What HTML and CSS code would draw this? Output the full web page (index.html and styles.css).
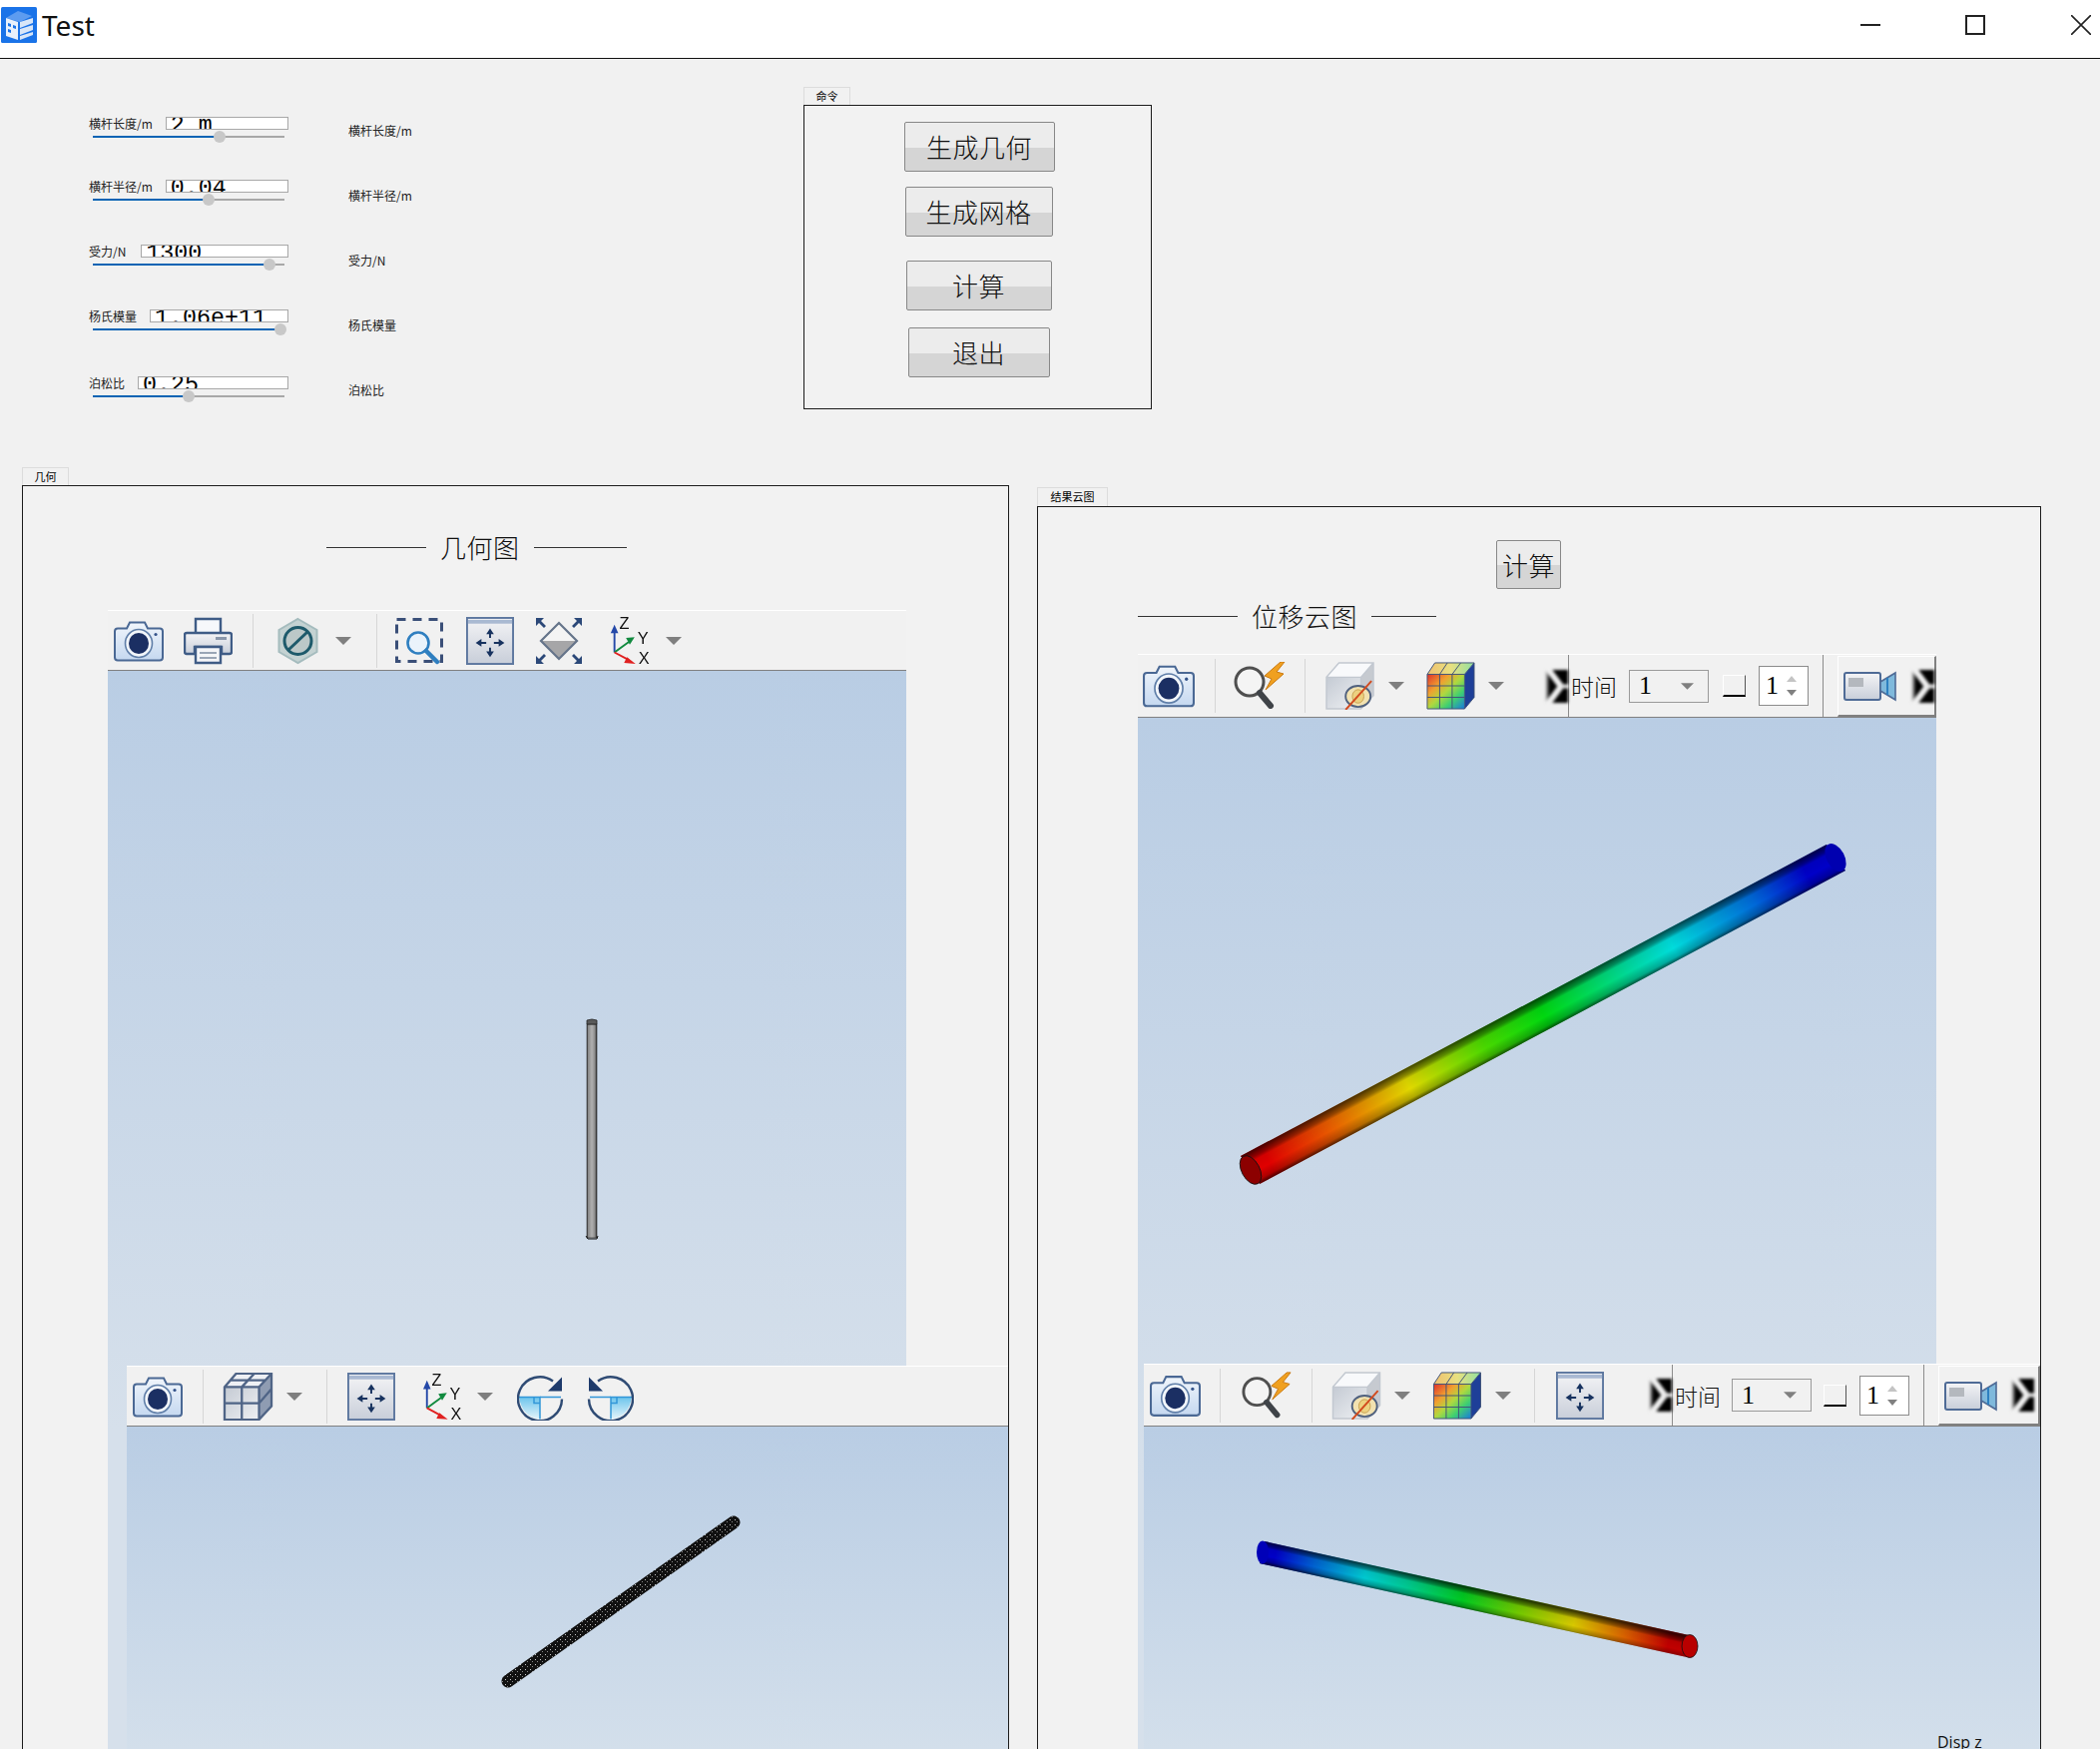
FILE: index.html
```html
<!DOCTYPE html>
<html lang="zh-CN">
<head>
<meta charset="utf-8">
<title>Test</title>
<link rel="stylesheet" href="styles.css">
</head>
<body>
<svg class="defs" aria-hidden="true">
  <defs>
    <linearGradient id="gCam" x1="0" y1="0" x2="0" y2="1"><stop offset="0" stop-color="#f0f5fb"/><stop offset="1" stop-color="#c5d8f0"/></linearGradient>
    <linearGradient id="gFit" x1="0" y1="0" x2="0" y2="1"><stop offset="0" stop-color="#f4f4f6"/><stop offset="1" stop-color="#c8ced9"/></linearGradient>
    <linearGradient id="gCube" x1="0" y1="0" x2="1" y2="1"><stop offset="0" stop-color="#c4cad3"/><stop offset="1" stop-color="#eff1f4"/></linearGradient>
    <linearGradient id="gCyan" x1="0" y1="0" x2="0" y2="1"><stop offset="0" stop-color="#6cc4ec"/><stop offset="1" stop-color="#e4f4fb"/></linearGradient>
    <linearGradient id="gHeat" x1="0" y1="0" x2="1" y2="1"><stop offset="0" stop-color="#e0302c"/><stop offset=".3" stop-color="#f0a030"/><stop offset=".5" stop-color="#b0d840"/><stop offset=".72" stop-color="#40d070"/><stop offset="1" stop-color="#1878e0"/></linearGradient>
    <linearGradient id="gHeatTop" x1="0" y1="0" x2="1" y2="0"><stop offset="0" stop-color="#f0c070"/><stop offset=".5" stop-color="#e8e080"/><stop offset="1" stop-color="#90e0a0"/></linearGradient>
    <linearGradient id="gChev" x1="0" y1="0" x2="1" y2="0"><stop offset="0" stop-color="#f0f0f0"/><stop offset=".2" stop-color="#000"/><stop offset="1" stop-color="#000"/></linearGradient>

    <symbol id="i-camera" viewBox="0 0 50 41">
      <path d="M4 8h9l3-6h15l3 6h12q3 0 3 3v26q0 3-3 3H4q-3 0-3-3V11q0-3 3-3z" fill="url(#gCam)" stroke="#4a6894" stroke-width="2"/>
      <ellipse cx="25" cy="23" rx="13.5" ry="14" fill="#f2f6fb" stroke="#5f7ea8" stroke-width="1.6"/>
      <ellipse cx="25" cy="23" rx="10" ry="10.5" fill="#1b2f63"/>
      <circle cx="42" cy="14" r="1.6" fill="#34538a"/>
    </symbol>
    <symbol id="i-printer" viewBox="0 0 49 48">
      <path d="M12 16V2h25v14" fill="#f6f8fb" stroke="#3f5c86" stroke-width="2.4"/>
      <path d="M3 16h43q2 0 2 2v17q0 2-2 2h-8v-7H11v7H3q-2 0-2-2V18q0-2 2-2z" fill="url(#gFit)" stroke="#3f5c86" stroke-width="2.4"/>
      <rect x="32" y="20" width="11" height="3" fill="#8a97ab"/>
      <path d="M12 30h25v16H12z" fill="#f4f5f8" stroke="#3f5c86" stroke-width="2.4"/>
      <path d="M16 36h17M16 41h17" stroke="#9aa5b6" stroke-width="2"/>
    </symbol>
    <symbol id="i-hex" viewBox="0 0 41 46">
      <path d="M20.5 1 39.5 12v22L20.5 45 1.5 34V12z" fill="#c4d2d2" stroke="#a5bcbe" stroke-width="2"/>
      <circle cx="20.5" cy="23" r="13.500" fill="#bcc8c8" stroke="#1e5a6b" stroke-width="3"/>
      <path d="M11 32 30 14" stroke="#1e5a6b" stroke-width="3"/>
    </symbol>
    <symbol id="i-caret" viewBox="0 0 16 8"><path d="M0 0h16L8 8z" fill="#7f7f7f"/></symbol>
    <symbol id="i-zoomrect" viewBox="0 0 48 46">
      <rect x="1.500" y="1.500" width="45" height="42" fill="none" stroke="#3a4f78" stroke-width="3" stroke-dasharray="9 7"/>
      <circle cx="23" cy="25" r="10.500" fill="#eaf3fb" stroke="#2f7fc0" stroke-width="2.600"/>
      <path d="M31 33 42 44" stroke="#2f7fc0" stroke-width="4.500" stroke-linecap="round"/>
    </symbol>
    <symbol id="i-fit" viewBox="0 0 50 50">
      <rect x="1" y="1" width="48" height="48" fill="url(#gFit)" stroke="#5d779f" stroke-width="2"/>
      <rect x="2" y="3" width="46" height="4" fill="#a9b9d2"/>
      <path d="M25 17v5M25 32v5M15 27h6M29 27h6" stroke="#17325f" stroke-width="2"/>
      <path d="M25 12l-4 6h8zM25 42l-4-6h8zM10 27l6-4v8zM40 27l-6-4v8z" fill="#17325f"/>
    </symbol>
    <symbol id="i-diamond" viewBox="0 0 48 48">
      <path d="M24 6 42 24H6z" fill="#f4f4f4"/><path d="M6 24h36L24 42z" fill="#a6a6a8"/>
      <path d="M24 6 42 24 24 42 6 24z" fill="none" stroke="#65748a" stroke-width="2.200"/>
      <path d="M1 1h8L6 4l5 5-2 2-5-5-3 3zM47 1h-8l3 3-5 5 2 2 5-5 3 3zM1 47h8l-3-3 5-5-2-2-5 5-3-3zM47 47h-8l3-3-5-5 2-2 5 5 3-3z" fill="#2b4878"/>
    </symbol>
    <symbol id="i-axes" viewBox="0 0 42 50">
      <path d="M5 37V14" stroke="#2448a8" stroke-width="2"/><path d="M5 8 1 17h8z" fill="#2448a8"/>
      <path d="M5 37 20 26" stroke="#118a3e" stroke-width="2"/><path d="M26 21l-9 1 4 7z" fill="#118a3e"/>
      <path d="M5 37 20 45" stroke="#e02020" stroke-width="2"/><path d="M27 49l-9-7-3 6z" fill="#e02020"/>
      <text x="10" y="13" class="axis-t">Z</text><text x="29" y="28" class="axis-t">Y</text><text x="30" y="49" class="axis-t">X</text>
    </symbol>
    <symbol id="i-wirecube" viewBox="0 0 51 50">
      <path d="M13 1h37L37 15H1z" fill="#eef0f4"/><path d="M37 15 50 1v34L37 49z" fill="#8f9cb2"/><rect x="1" y="15" width="36" height="34" fill="url(#gCube)"/>
      <path d="M13 1h37v34L37 49H1V15zM1 15h36L50 1M37 15v34M19 15v34M1 32h36L50 17M19 15 32 1M7 8h37" fill="none" stroke="#4f6486" stroke-width="2.400"/>
    </symbol>
    <symbol id="i-rotcw" viewBox="0 0 47 47">
      <path d="M2 24h21v22Q5 44 2 24z" fill="url(#gCyan)"/>
      <path d="M23 24h21" stroke="#3196d8" stroke-width="1.500"/><path d="M2 24h21v22" fill="none" stroke="#3196d8" stroke-width="1.500"/><path d="M17 24v6h6" fill="none" stroke="#3196d8" stroke-width="1.500"/>
      <path d="M36 8A22 22 0 1 0 45 26" fill="none" stroke="#2f4b74" stroke-width="2.400"/>
      <path d="M45 4v14H31z" fill="#1d3a6b"/>
    </symbol>
    <symbol id="i-rotccw" viewBox="0 0 47 47">
      <path d="M45 24H24v22Q42 44 45 24z" fill="url(#gCyan)"/>
      <path d="M24 24H3" stroke="#3196d8" stroke-width="1.500"/><path d="M45 24H24v22" fill="none" stroke="#3196d8" stroke-width="1.500"/><path d="M30 24v6h-6" fill="none" stroke="#3196d8" stroke-width="1.500"/>
      <path d="M11 8A22 22 0 1 1 2 26" fill="none" stroke="#2f4b74" stroke-width="2.400"/>
      <path d="M2 4v14h14z" fill="#1d3a6b"/>
    </symbol>
    <symbol id="i-mag" viewBox="0 0 54 48">
      <circle cx="17" cy="20" r="14" fill="#f4f4f4" stroke="#4f4f4f" stroke-width="3"/>
      <path d="M27 31 38 44" stroke="#3f4348" stroke-width="6" stroke-linecap="round"/>
      <path d="M48 0 32 14l7 3-6 11 18-16-7-2 8-10z" fill="#f0a020" stroke="#c87810" stroke-width="1"/>
    </symbol>
    <symbol id="i-hidecube" viewBox="0 0 52 50">
      <path d="M1 16 14 1h36L37 16z" fill="#f8f9fb"/><path d="M37 16 50 1v34L37 49z" fill="#c6cad0"/><rect x="1" y="16" width="36" height="33" fill="url(#gCube)"/>
      <path d="M14 1h36v34L37 49H1V16zM1 16h36L50 1M37 16v33" fill="none" stroke="#c2c8d0" stroke-width="1.500"/>
      <ellipse cx="34" cy="36" rx="13" ry="11" fill="#f2e2b0" stroke="#50617e" stroke-width="2"/>
      <ellipse cx="34" cy="36" rx="6" ry="7" fill="#ecd180" stroke="#c8a050" stroke-width="1"/>
      <path d="M21 50 48 20" stroke="#d24a1e" stroke-width="2"/>
    </symbol>
    <symbol id="i-heat" viewBox="0 0 50 50">
      <path d="M9 1h41L40 13H1z" fill="url(#gHeatTop)"/><path d="M40 13 50 1v36L40 49z" fill="#1e3f98"/><rect x="1" y="13" width="39" height="36" fill="url(#gHeat)"/>
      <path d="M9 1h41v36L40 49H1V13zM1 13h39L50 1M14 13v36M27 13v36M1 25h39M1 37h39M14 13 22 1M27 13 36 1M40 13v36" fill="none" stroke="#3f5278" stroke-width="1"/>
    </symbol>
    <symbol id="i-video" viewBox="0 0 53 32">
      <rect x="1" y="3" width="36" height="27" rx="2" fill="url(#gFit)" stroke="#4f6b96" stroke-width="2"/>
      <rect x="5" y="8" width="15" height="9" fill="#b4b8be"/>
      <path d="M37 12 52 3v27L37 21z" fill="#7fb9dc" stroke="#4f6b96" stroke-width="1.600"/>
      <path d="M44 8v17" stroke="#2d80c0" stroke-width="2"/>
    </symbol>
    <symbol id="i-chev" viewBox="0 0 23 33" preserveAspectRatio="none">
      <rect width="23" height="33" fill="url(#gChev)"/>
      <path d="M2-2 16 16.500 2 35" fill="none" stroke="#f0f0f0" stroke-width="6"/>
      <path d="M16 16.500h7" stroke="#e0e0e0" stroke-width="4"/>
    </symbol>
    <symbol id="i-logo" viewBox="0 0 36 36">
      <rect width="36" height="36" rx="1.500" fill="#1a73e8"/>
      <path d="M5 11 17 4l14 5-12 6z" fill="#5d9cf0"/>
      <path d="M5 11l12 4v18L5 29z" fill="#e8f0fb"/>
      <path d="M19 15 32 11v5l-13 5zM19 22 32 18v5l-13 5zM19 29 32 25v3l-13 5z" fill="#d8e6f8"/>
      <path d="M7 16l3 1v3l-3-1zM12 18l3 1v3l-3-1zM7 22l3 1v3l-3-1z" fill="#1a73e8"/>
    </symbol>
  </defs>
</svg>

<header class="titlebar">
  <svg class="logo"><use href="#i-logo"/></svg>
  <span class="app-name">Test</span>
  <div class="win-controls">
    <span class="win-min"></span>
    <span class="win-max"></span>
    <svg class="win-close" viewBox="0 0 20 20"><path d="M0 0 20 20M20 0 0 20" stroke="#222" stroke-width="1.600"/></svg>
  </div>
</header>

<section class="upper">
  <div class="params-area">
    <div class="params">
      <div class="param">
        <div class="param-head"><label>横杆长度/m</label><div class="value-box">2 m</div></div>
        <div class="slider"><div class="slider-fill" style="width:66.1%"><i class="handle"></i></div></div>
      </div>
      <div class="param">
        <div class="param-head"><label>横杆半径/m</label><div class="value-box">0.04</div></div>
        <div class="slider"><div class="slider-fill" style="width:60.4%"><i class="handle"></i></div></div>
      </div>
      <div class="param">
        <div class="param-head"><label>受力/N</label><div class="value-box">1300</div></div>
        <div class="slider"><div class="slider-fill" style="width:92.2%"><i class="handle"></i></div></div>
      </div>
      <div class="param">
        <div class="param-head"><label>杨氏模量</label><div class="value-box">1.06e+11</div></div>
        <div class="slider"><div class="slider-fill" style="width:97.9%"><i class="handle"></i></div></div>
      </div>
      <div class="param">
        <div class="param-head"><label>泊松比</label><div class="value-box">0.25</div></div>
        <div class="slider"><div class="slider-fill" style="width:50%"><i class="handle"></i></div></div>
      </div>
    </div>
    <ul class="echo-labels">
      <li>横杆长度/m</li><li>横杆半径/m</li><li>受力/N</li><li>杨氏模量</li><li>泊松比</li>
    </ul>
  </div>
  <div class="group group-cmd">
    <div class="tab tab-cmd">命令</div>
    <div class="frame frame-cmd">
      <button class="push b1">生成几何</button>
      <button class="push b2">生成网格</button>
      <button class="push b3">计算</button>
      <button class="push b4">退出</button>
    </div>
  </div>
</section>

<section class="lower">
  <div class="group group-geo">
    <div class="tab tab-geo">几何</div>
    <div class="frame frame-geo">
      <div class="heading head-geo"><i class="rule r100"></i><span>几何图</span><i class="rule r93"></i></div>
      <div class="viewer viewer-geo">
        <div class="toolbar">
          <svg class="ic w50 m6"><use href="#i-camera"/></svg>
          <svg class="ic w49 m20"><use href="#i-printer"/></svg>
          <i class="sep m20"></i>
          <svg class="ic w41 m24"><use href="#i-hex"/></svg>
          <svg class="caret m17"><use href="#i-caret"/></svg>
          <i class="sep m25"></i>
          <svg class="ic w48 m18"><use href="#i-zoomrect"/></svg>
          <svg class="ic w50 m22"><use href="#i-fit"/></svg>
          <svg class="ic w48 m20"><use href="#i-diamond"/></svg>
          <svg class="ic w42 m26"><use href="#i-axes"/></svg>
          <svg class="caret m15"><use href="#i-caret"/></svg>
        </div>
        <div class="view view-long">
          <svg class="scene" viewBox="108 672 800 1080">
            <defs>
              <linearGradient id="gRodA" x1="588" y1="0" x2="598" y2="0" gradientUnits="userSpaceOnUse"><stop offset="0" stop-color="#3c3c3c"/><stop offset=".15" stop-color="#8c8c8c"/><stop offset=".5" stop-color="#b0b0b0"/><stop offset=".8" stop-color="#8c8c8c"/><stop offset="1" stop-color="#303030"/></linearGradient>
            </defs>
            <rect x="588" y="1026" width="10" height="214" fill="url(#gRodA)" stroke="#222" stroke-width=".6"/>
            <path d="M588 1026v-4l5-1 5 1 0 4z" fill="#5a5a5a" stroke="#222" stroke-width=".8"/>
            <path d="M587 1238l2 3h9l1-3" fill="none" stroke="#111" stroke-width="1"/>
          </svg>
        </div>
      </div>
      <div class="viewer viewer-mesh">
        <div class="toolbar">
          <svg class="ic w50 m6"><use href="#i-camera"/></svg>
          <i class="sep m20"></i>
          <svg class="ic w51 m19"><use href="#i-wirecube"/></svg>
          <svg class="caret m13"><use href="#i-caret"/></svg>
          <i class="sep m24"></i>
          <svg class="ic w50 m19"><use href="#i-fit"/></svg>
          <svg class="ic w40 m26"><use href="#i-axes"/></svg>
          <svg class="caret m15"><use href="#i-caret"/></svg>
          <svg class="ic w47 m24"><use href="#i-rotcw"/></svg>
          <svg class="ic w47 m23"><use href="#i-rotccw"/></svg>
        </div>
        <div class="view view-short">
          <svg class="scene" viewBox="127 1428 883 324">
            <defs>
              <pattern id="pMesh" width="5" height="5" patternUnits="userSpaceOnUse">
                <rect width="5" height="5" fill="#111"/>
                <rect x="1" y="1" width="1" height="1" fill="#c8c8c8"/>
                <rect x="3" y="3" width="1" height="1" fill="#8a8a8a"/>
              </pattern>
            </defs>
            <path d="M509 1683 735 1524" stroke="url(#pMesh)" stroke-width="13" stroke-linecap="round"/>
          </svg>
        </div>
      </div>
    </div>
  </div>

  <div class="group group-res">
    <div class="tab tab-res">结果云图</div>
    <div class="frame frame-res">
      <button class="push calc">计算</button>
      <div class="heading head-res"><i class="rule r100"></i><span>位移云图</span><i class="rule r65"></i></div>
      <div class="viewer viewer-res">
        <div class="toolbar">
          <svg class="ic w52 m5"><use href="#i-camera"/></svg>
          <i class="sep m20"></i>
          <svg class="ic w54 m17"><use href="#i-mag"/></svg>
          <i class="sep m18"></i>
          <svg class="ic w52 m19"><use href="#i-hidecube"/></svg>
          <svg class="caret m12"><use href="#i-caret"/></svg>
          <svg class="ic w50 m21"><use href="#i-heat"/></svg>
          <svg class="caret m13"><use href="#i-caret"/></svg>
          <svg class="chev m41"><use href="#i-chev"/></svg>
          <i class="vline"></i>
          <span class="t-label">时间</span>
          <div class="combo m12"><span>1</span><svg class="caret-s"><use href="#i-caret"/></svg></div>
          <i class="check m14"></i>
          <div class="spin m13"><span>1</span><div class="spin-arrows"><i class="up"></i><i class="down"></i></div></div>
          <i class="vline m14"></i>
          <div class="rec m14">
            <svg class="video"><use href="#i-video"/></svg>
            <svg class="chev m15"><use href="#i-chev"/></svg>
          </div>
        </div>
        <div class="view view-long">
          <svg class="scene" viewBox="1140 719 800 1033">
            <defs>
              <linearGradient id="gRodB" x1="1253" y1="1172" x2="1839" y2="859" gradientUnits="userSpaceOnUse">
                <stop offset=".03" stop-color="#e00000"/><stop offset=".14" stop-color="#e86000"/><stop offset=".27" stop-color="#e0d800"/><stop offset=".4" stop-color="#48d800"/><stop offset=".5" stop-color="#00d810"/><stop offset=".65" stop-color="#00d8a0"/><stop offset=".72" stop-color="#00dcdc"/><stop offset=".86" stop-color="#0068d8"/><stop offset=".95" stop-color="#0000c8"/>
              </linearGradient>
              <linearGradient id="gShadeB" x1="1243" y1="1158" x2="1259" y2="1188" gradientUnits="userSpaceOnUse">
                <stop offset="0" stop-color="#000" stop-opacity=".7"/><stop offset=".2" stop-color="#000" stop-opacity=".35"/><stop offset=".3" stop-color="#000" stop-opacity=".06"/><stop offset=".6" stop-color="#000" stop-opacity="0"/><stop offset=".86" stop-color="#000" stop-opacity=".22"/><stop offset="1" stop-color="#000" stop-opacity=".7"/>
              </linearGradient>
            </defs>
            <path d="M1243 1158 1830 846 1849 872 1262 1186z" fill="url(#gRodB)"/>
            <path d="M1243 1158 1830 846 1849 872 1262 1186z" fill="url(#gShadeB)"/>
            <ellipse cx="1839" cy="859" rx="9" ry="15" transform="rotate(-28 1839 859)" fill="#0000b0"/>
            <ellipse cx="1253" cy="1172" rx="9" ry="15.500" transform="rotate(-28 1253 1172)" fill="#8c0000" stroke="#111" stroke-width=".8"/>
          </svg>
        </div>
      </div>
      <div class="viewer viewer-disp">
        <div class="toolbar">
          <svg class="ic w51 m6"><use href="#i-camera"/></svg>
          <i class="sep m19"></i>
          <svg class="ic w52 m20"><use href="#i-mag"/></svg>
          <i class="sep m19"></i>
          <svg class="ic w51 m19"><use href="#i-hidecube"/></svg>
          <svg class="caret m12"><use href="#i-caret"/></svg>
          <svg class="ic w49 m22"><use href="#i-heat"/></svg>
          <svg class="caret m14"><use href="#i-caret"/></svg>
          <i class="sep m23"></i>
          <svg class="ic w50 m20"><use href="#i-fit"/></svg>
          <svg class="chev m44"><use href="#i-chev"/></svg>
          <i class="vline"></i>
          <span class="t-label">时间</span>
          <div class="combo m11"><span>1</span><svg class="caret-s"><use href="#i-caret"/></svg></div>
          <i class="check m12"></i>
          <div class="spin m13"><span>1</span><div class="spin-arrows"><i class="up"></i><i class="down"></i></div></div>
          <i class="vline m14"></i>
          <div class="rec m14">
            <svg class="video"><use href="#i-video"/></svg>
            <svg class="chev m14"><use href="#i-chev"/></svg>
          </div>
        </div>
        <div class="view view-short">
          <svg class="scene" viewBox="1146 1428 898 324">
            <defs>
              <linearGradient id="gRodC" x1="1265" y1="1554" x2="1693" y2="1648" gradientUnits="userSpaceOnUse">
                <stop offset=".03" stop-color="#0000c8"/><stop offset=".12" stop-color="#0060d0"/><stop offset=".24" stop-color="#00c8d0"/><stop offset=".34" stop-color="#00c890"/><stop offset=".47" stop-color="#00c820"/><stop offset=".6" stop-color="#70c800"/><stop offset=".73" stop-color="#d8c800"/><stop offset=".85" stop-color="#d86000"/><stop offset=".95" stop-color="#c00000"/>
              </linearGradient>
              <linearGradient id="gShadeC" x1="1268" y1="1543" x2="1263" y2="1565" gradientUnits="userSpaceOnUse">
                <stop offset="0" stop-color="#000" stop-opacity=".7"/><stop offset=".2" stop-color="#000" stop-opacity=".35"/><stop offset=".3" stop-color="#000" stop-opacity=".06"/><stop offset=".62" stop-color="#000" stop-opacity="0"/><stop offset=".85" stop-color="#000" stop-opacity=".25"/><stop offset="1" stop-color="#000" stop-opacity=".7"/>
              </linearGradient>
            </defs>
            <path d="M1267 1543 1692 1637 1690 1659 1262 1565z" fill="url(#gRodC)"/>
            <path d="M1267 1543 1692 1637 1690 1659 1262 1565z" fill="url(#gShadeC)"/>
            <ellipse cx="1265" cy="1554" rx="6" ry="11.500" fill="#0000b8"/>
            <ellipse cx="1693" cy="1648" rx="8" ry="11.500" fill="#b80000" stroke="#111" stroke-width=".8"/>
          </svg>
          <span class="legend-title">Disp z</span>
        </div>
      </div>
    </div>
  </div>
</section>
</body>
</html>
```

FILE: styles.css
```css
* { box-sizing: border-box; }

html, body {
  margin: 0;
  padding: 0;
}

body {
  width: 2104px;
  height: 1752px;
  overflow: hidden;
  background: #f1f1f1;
  font-family: "Noto Sans CJK SC", "Noto Sans", sans-serif;
  color: #222;
}

.defs {
  position: absolute;
  width: 0;
  height: 0;
}

.axis-t {
  font-family: "Liberation Sans", sans-serif;
  font-size: 17px;
  fill: #111;
}

/* Title bar */
.titlebar {
  display: flex;
  align-items: center;
  height: 59px;
  padding: 0 9px 0 1px;
  background: #fff;
  border-bottom: 1px solid #111;
}

.logo {
  width: 36px;
  height: 36px;
  margin-top: -8px;
}

.app-name {
  margin: -8px 0 0 5px;
  font-family: "Noto Sans", sans-serif;
  font-size: 28px;
  line-height: 36px;
  color: #111;
}

.win-controls {
  display: flex;
  align-items: center;
  margin: -8px 0 0 auto;
}

.win-min {
  width: 20px;
  height: 2px;
  background: #222;
}

.win-max {
  width: 20px;
  height: 20px;
  margin-left: 85px;
  border: 2px solid #222;
}

.win-close {
  width: 20px;
  height: 20px;
  margin-left: 86px;
}

/* Upper region */
.upper {
  display: flex;
  height: 409px;
}

.params-area {
  display: flex;
  width: 805px;
  padding-left: 89px;
}

.params {
  width: 200px;
  padding-top: 58px;
}

.param { height: 63px; }
.param:nth-child(n+2) { height: 65px; }
.param:nth-child(4) { height: 67px; }

.param-head {
  display: flex;
  align-items: center;
  gap: 13px;
  height: 13px;
}

.param:nth-child(3) .param-head { gap: 15px; }

.param-head label {
  font-size: 12px;
  line-height: 16px;
  white-space: nowrap;
}

.value-box {
  flex: 1;
  height: 13px;
  padding-left: 4px;
  overflow: hidden;
  background: #fff;
  border: 1px solid #a8a8a8;
  font-family: "Liberation Mono", monospace;
  font-size: 23.3px;
  line-height: 17px;
  color: #000;
  white-space: pre;
}

.slider {
  position: relative;
  height: 2px;
  margin: 6px 4px 0;
  background: #a8a8a8;
}

.slider-fill {
  position: relative;
  height: 100%;
  background: #0a64b4;
}

.handle {
  position: absolute;
  right: -6px;
  top: -5px;
  width: 12px;
  height: 12px;
  border-radius: 50%;
  background: #c8c8c8;
}

.echo-labels {
  margin: 0 0 0 60px;
  padding: 39px 0 0;
  list-style: none;
}

.echo-labels li {
  height: 65px;
  font-size: 12px;
  line-height: 65px;
  white-space: nowrap;
}

/* Group boxes */
.group-cmd {
  width: 349px;
  padding-top: 28px;
}

.tab {
  width: 47px;
  height: 18px;
  background: #f1f1f1;
  border: 1px solid #dcdcdc;
  border-bottom: 0;
  font-size: 11px;
  line-height: 17px;
  text-align: center;
  color: #000;
}

.tab-res {
  width: 71px;
  height: 19px;
}

.frame {
  position: relative;
  background: #f2f2f2;
  border: 1px solid #1c1c1c;
}

.frame-cmd {
  display: flex;
  flex-direction: column;
  align-items: center;
  height: 305px;
  padding-top: 16px;
}

.push {
  display: block;
  height: 50px;
  padding: 0;
  background: linear-gradient(#ececec 0 52%, #d5d5d5 52% 100%);
  border: 1px solid #888;
  border-radius: 2px;
  font-family: "Noto Sans CJK SC", sans-serif;
  font-size: 26px;
  font-weight: 300;
  letter-spacing: .5px;
  line-height: 46px;
  color: #111;
}

.b1 { width: 151px; margin-left: 3px; }
.b2 { width: 148px; margin: 15px 0 0 2px; }
.b3 { width: 146px; margin: 24px 0 0 2px; }
.b4 { width: 142px; margin: 17px 0 0 2px; }

/* Lower region */
.lower {
  display: flex;
  align-items: flex-start;
  height: 1284px;
  padding-left: 22px;
  overflow: hidden;
}

.group-geo {
  width: 989px;
}

.group-res {
  width: 1006px;
  margin: 20px 0 0 28px;
}

.frame-geo,
.frame-res {
  height: 1400px;
  overflow: hidden;
}

.heading {
  display: flex;
  align-items: center;
  gap: 14px;
  height: 34px;
  font-size: 26px;
  font-weight: 300;
  letter-spacing: .5px;
  line-height: 34px;
  color: #111;
}

.head-geo {
  margin: 44px 0 0 304px;
}

.head-res {
  margin: 10px 0 0 100px;
}

.rule {
  display: block;
  height: 1px;
  background: #333;
}

.r100 { width: 100px; }
.r93 { width: 93px; }
.r65 { width: 65px; }

.calc {
  width: 65px;
  height: 49px;
  margin: 33px 0 0 459px;
  line-height: 44px;
}

/* Viewers */
.viewer-geo {
  width: 800px;
  margin: 46px 0 0 85px;
}

.viewer-res {
  width: 800px;
  margin: 21px 0 0 100px;
}

.viewer-mesh {
  position: absolute;
  left: 104px;
  top: 881px;
  width: 883px;
}

.viewer-disp {
  position: absolute;
  left: 106px;
  top: 858px;
  width: 898px;
}

.toolbar {
  display: flex;
  align-items: center;
  height: 61px;
  background: #f1f1f1;
  border-top: 1px solid #fff;
  border-bottom: 1px solid #808080;
}

.viewer-res .toolbar,
.viewer-disp .toolbar {
  height: 64px;
}

.viewer-disp .toolbar {
  height: 63px;
}

.view {
  position: relative;
  background: linear-gradient(#b9cde4, #d6e0eb 760px);
}

.view-long { height: 1100px; }

.view-short {
  height: 340px;
  background: linear-gradient(#b9cde4, #d3dfeb 324px);
}

.scene {
  display: block;
  width: 100%;
  height: 100%;
}

.view-long .scene { height: auto; }
.view-short .scene { height: 324px; }

.legend-title {
  position: absolute;
  left: 795px;
  top: 306px;
  font-family: "Open Sans", sans-serif;
  font-size: 16px;
  line-height: 20px;
  color: #111;
}

.ic {
  flex: none;
  height: 48px;
  filter: blur(.4px);
}

.w40 { width: 40px; }
.w41 { width: 41px; }
.w42 { width: 42px; }
.w47 { width: 47px; }
.w48 { width: 48px; }
.w49 { width: 49px; }
.w50 { width: 50px; }
.w51 { width: 51px; }
.w52 { width: 52px; }
.w54 { width: 54px; }

.m5 { margin-left: 5px; }
.m6 { margin-left: 6px; }
.m11 { margin-left: 11px; }
.m12 { margin-left: 12px; }
.m13 { margin-left: 13px; }
.m14 { margin-left: 14px; }
.m15 { margin-left: 15px; }
.m17 { margin-left: 17px; }
.m18 { margin-left: 18px; }
.m19 { margin-left: 19px; }
.m20 { margin-left: 20px; }
.m21 { margin-left: 21px; }
.m22 { margin-left: 22px; }
.m23 { margin-left: 23px; }
.m24 { margin-left: 24px; }
.m25 { margin-left: 25px; }
.m26 { margin-left: 26px; }
.m41 { margin-left: 41px; }
.m44 { margin-left: 44px; }

.sep {
  flex: none;
  width: 1px;
  height: 54px;
  background: #d6d6d6;
}

.caret {
  flex: none;
  width: 16px;
  height: 8px;
}

.chev {
  flex: none;
  width: 23px;
  height: 33px;
  filter: blur(1.4px);
}

.vline {
  flex: none;
  align-self: stretch;
  width: 1px;
  background: #8c8c8c;
}

.t-label {
  flex: none;
  margin-left: 2px;
  font-size: 23px;
  font-weight: 300;
  line-height: 30px;
  color: #111;
}

.combo {
  display: flex;
  flex: none;
  align-items: center;
  justify-content: space-between;
  width: 80px;
  height: 33px;
  padding: 0 14px 0 9px;
  border: 1px solid #9a9a9a;
  font-family: "Liberation Serif", serif;
  font-size: 26px;
  color: #000;
}

.caret-s {
  width: 13px;
  height: 7px;
}

.check {
  flex: none;
  width: 23px;
  height: 22px;
  background: #f1f1f1;
  border-right: 1px solid #555;
  border-bottom: 2px solid #000;
  border-top: 1px solid #fff;
  border-left: 1px solid #fff;
}

.spin {
  display: flex;
  flex: none;
  align-items: center;
  justify-content: space-between;
  width: 50px;
  height: 40px;
  padding: 0 11px 0 6px;
  background: #fff;
  border: 1px solid #8c8c8c;
  font-family: "Liberation Serif", serif;
  font-size: 26px;
  color: #000;
}

.spin-arrows {
  display: flex;
  flex-direction: column;
  gap: 8px;
}

.spin-arrows i {
  display: block;
  width: 0;
  height: 0;
  border-left: 5px solid transparent;
  border-right: 5px solid transparent;
}

.spin-arrows .up { border-bottom: 6px solid #c4c4c4; }
.spin-arrows .down { border-top: 6px solid #808080; }

.rec {
  display: flex;
  flex: 1;
  align-items: center;
  align-self: stretch;
  padding-left: 5px;
  margin-top: 1px;
  border-top: 1px solid #fff;
  border-left: 1px solid #fff;
  border-right: 2px solid #808080;
  border-bottom: 2px solid #808080;
}

.video {
  flex: none;
  width: 53px;
  height: 32px;
  filter: blur(.4px);
}
```
